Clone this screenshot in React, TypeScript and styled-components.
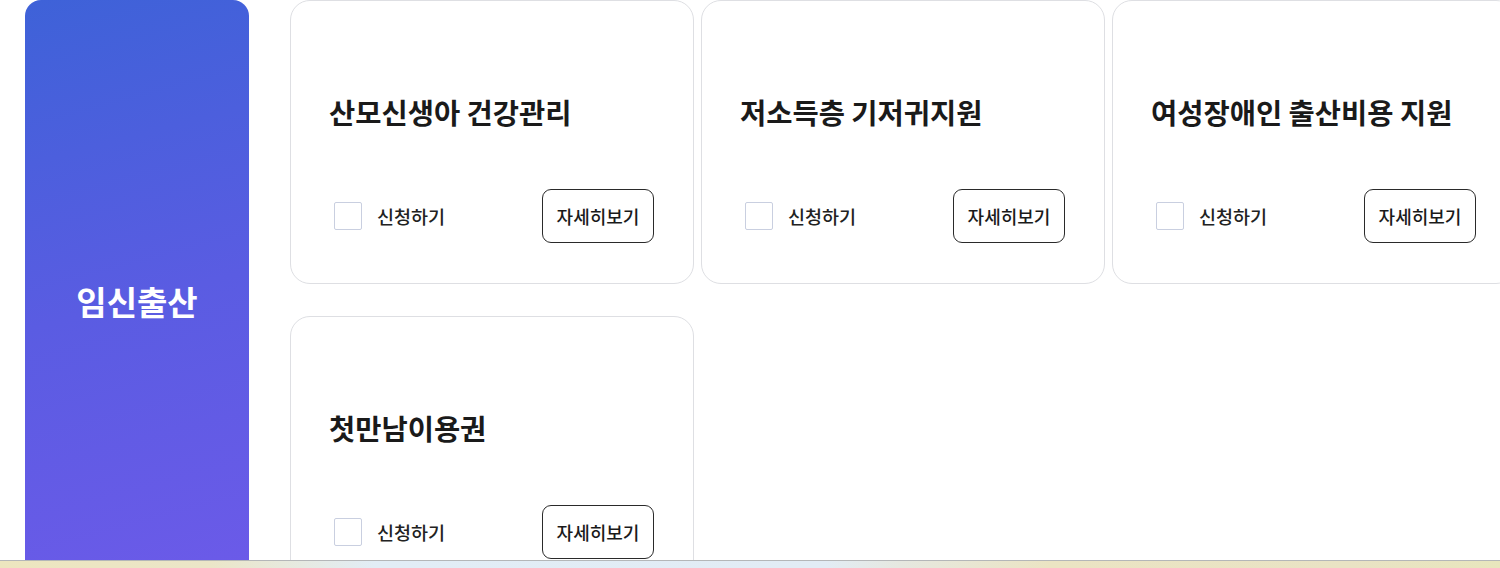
import React from "react";
import styled, { createGlobalStyle } from "styled-components";

const GlobalStyle = createGlobalStyle`
  html, body {
    margin: 0;
    padding: 0;
    background: #ffffff;
    overflow: hidden;
  }
  body {
    font-family: "Noto Sans CJK KR", "Noto Sans", sans-serif;
    color: #1a1a1a;
  }
  * { box-sizing: border-box; }
`;

const Page = styled.div`
  display: flex;
  align-items: stretch;
  gap: 41px;
  padding-left: 25px;
  width: 1600px;
`;

const Category = styled.div`
  flex: 0 0 224px;
  display: flex;
  align-items: center;
  justify-content: center;
  border-radius: 16px;
  background: linear-gradient(165deg, #3e62d8 0%, #5a5ce2 50%, #6d5ae9 100%);
  color: #ffffff;
  font-size: 33px;
  font-weight: 700;
  letter-spacing: 0;
  padding-top: 2px;
`;

const Grid = styled.div`
  display: grid;
  grid-template-columns: repeat(3, 404px);
  grid-auto-rows: 284px;
  column-gap: 7px;
  row-gap: 32px;
`;

const Card = styled.div`
  display: flex;
  flex-direction: column;
  justify-content: flex-end;
  gap: 58px;
  padding: 40px 39px 40px 38px;
  border: 1px solid #dedfe3;
  border-radius: 20px;
  background: #ffffff;
`;

const Title = styled.h3`
  margin: 0;
  font-size: 28.5px;
  line-height: 39px;
  font-weight: 700;
  letter-spacing: 0;
  color: #1a1a1a;
  white-space: nowrap;
`;

const Footer = styled.div`
  display: flex;
  align-items: center;
  justify-content: space-between;
  height: 54px;
  padding-left: 5px;
`;

const Apply = styled.label`
  display: flex;
  align-items: center;
  gap: 15px;
  font-size: 18.5px;
  font-weight: 500;
  color: #222222;
  letter-spacing: 0;
  cursor: pointer;
`;

const Box = styled.span`
  width: 28px;
  height: 28px;
  border: 1.5px solid #c9cfe0;
  border-radius: 2px;
  background: #ffffff;
`;

const DetailButton = styled.button`
  height: 54px;
  width: 112px;
  border: 1px solid #2a2a2a;
  border-radius: 9px;
  background: #ffffff;
  font-family: "Noto Sans CJK KR", "Noto Sans", sans-serif;
  font-size: 18px;
  font-weight: 500;
  letter-spacing: 0;
  color: #1a1a1a;
  padding: 0;
  cursor: pointer;
`;

const Taskbar = styled.div`
  position: fixed;
  left: 0;
  right: 0;
  bottom: 0;
  height: 8px;
  border-top: 1px solid #b4b6b8;
  background: linear-gradient(
    90deg,
    #ede6bf 0%,
    #ebe6c8 14%,
    #e2edf6 25%,
    #e2ecf5 55%,
    #e6e8e0 60%,
    #ebe4c3 70%,
    #e9e3c4 90%,
    #e8e6bd 100%
  );
`;

const items = [
  "산모신생아 건강관리",
  "저소득층 기저귀지원",
  "여성장애인 출산비용 지원",
  "첫만남이용권",
];

export default function App() {
  return (
    <>
      <GlobalStyle />
      <Page>
        <Category>임신출산</Category>
        <Grid>
          {items.map((t) => (
            <Card key={t}>
              <Title>{t}</Title>
              <Footer>
                <Apply>
                  <Box />
                  신청하기
                </Apply>
                <DetailButton>자세히보기</DetailButton>
              </Footer>
            </Card>
          ))}
        </Grid>
      </Page>
      <Taskbar />
    </>
  );
}
